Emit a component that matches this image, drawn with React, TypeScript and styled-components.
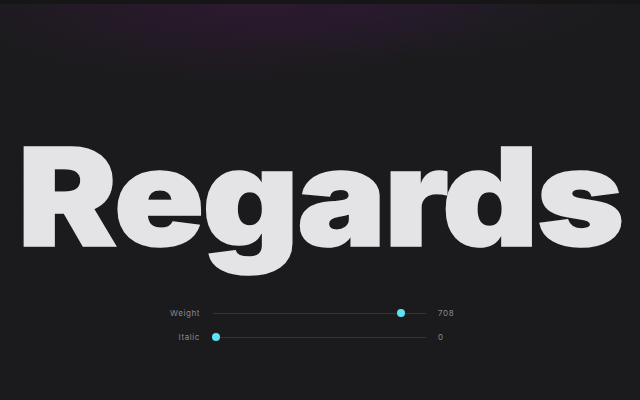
import * as React from "react";
import styled, { createGlobalStyle } from "styled-components";

const GlobalStyle = createGlobalStyle`
  html, body {
    margin: 0;
    padding: 0;
    background: #1b1b1d;
  }
  body {
    font-family: "Inter", "Liberation Sans", sans-serif;
  }
`;

const Page = styled.div`
  width: 640px;
  height: 400px;
  overflow: hidden;
  display: flex;
  flex-direction: column;
  background:
    radial-gradient(ellipse 280px 80px at 36% 0px, rgba(62, 22, 66, 0.5), rgba(40, 20, 50, 0) 100%),
    radial-gradient(ellipse 220px 60px at 62% 0px, rgba(48, 28, 58, 0.4), rgba(40, 20, 50, 0) 100%),
    #1b1b1d;
`;

const TopBar = styled.div`
  height: 4px;
  background: #161617;
  flex-shrink: 0;
`;

const Stage = styled.div`
  display: flex;
  justify-content: center;
  padding-top: 125px;
`;

const Title = styled.h1<{ $weight: number }>`
  margin: 0;
  font-family: "Inter", "Liberation Sans", sans-serif;
  font-weight: ${(p) => p.$weight};
  font-size: 136px;
  line-height: 136px;
  letter-spacing: -2px;
  color: #e4e4e6;
  white-space: nowrap;
  transform: scaleX(1.1);
  -webkit-text-stroke: 1.5px #e4e4e6;
`;

const Controls = styled.div`
  display: grid;
  grid-template-columns: 200px 214px auto;
  column-gap: 12px;
  margin-top: 36px;
`;

const Label = styled.span`
  font-size: 8px;
  letter-spacing: 0.6px;
  color: #8a8a8e;
  text-align: right;
  line-height: 24px;
`;

const Track = styled.div`
  position: relative;
  height: 24px;
  margin-left: 1px;
  &::before {
    content: "";
    position: absolute;
    left: 0;
    right: 0;
    top: 11.5px;
    height: 1px;
    background: #333336;
  }
`;

const Thumb = styled.div`
  position: absolute;
  top: 8px;
  width: 8px;
  height: 8px;
  margin-left: -4px;
  border-radius: 50%;
  background: #5ce3f2;
`;

const Value = styled.span`
  font-size: 8px;
  letter-spacing: 0.6px;
  color: #8a8a8e;
  line-height: 24px;
`;

type Axis = { name: string; min: number; max: number; value: number };

const axes: Axis[] = [
  { name: "Weight", min: 100, max: 900, value: 708 },
  { name: "Italic", min: 0, max: 1, value: 0 },
];

export default function App() {
  return (
    <>
      <GlobalStyle />
      <Page>
        <TopBar />
        <Stage>
          <Title $weight={900}>Regards</Title>
        </Stage>
        <Controls>
          {axes.map((a) => {
            const pct = (a.value - a.min) / (a.max - a.min);
            return (
              <React.Fragment key={a.name}>
                <Label>{a.name}</Label>
                <Track>
                  <Thumb style={{ left: 3 + pct * 243 }} />
                </Track>
                <Value>{a.value}</Value>
              </React.Fragment>
            );
          })}
        </Controls>
      </Page>
    </>
  );
}
